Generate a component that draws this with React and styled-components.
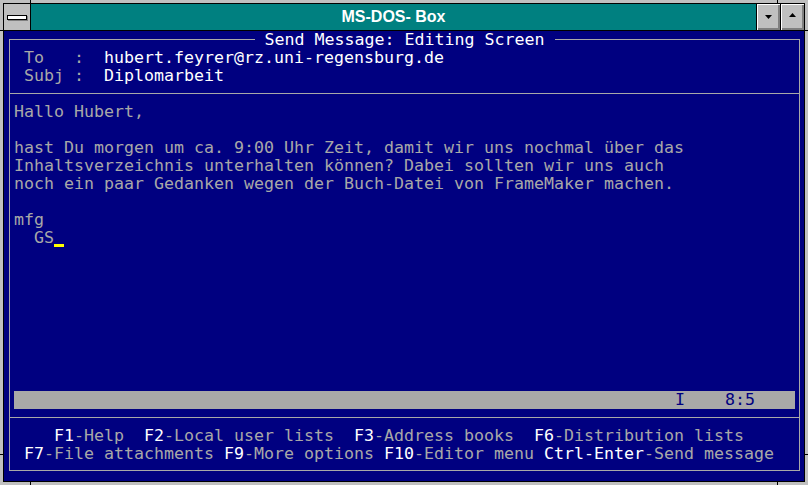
import React from 'react';
import styled, { createGlobalStyle } from 'styled-components';

const GlobalStyle = createGlobalStyle`
html, body {
  margin:0;
  padding:0;
  background:#c0c0c0;
}
body {
  width:808px;
  height:485px;
  overflow:hidden;
}
`;

const Window = styled.div`
position:relative;
width:808px;
height:485px;
box-sizing:border-box;
padding:3px;
background:#c0c0c0;
&::after {
  content:'';
  position:absolute;
  inset:0;
  pointer-events:none;
  background:
    linear-gradient(#000,#000) 30px 0 / 1px 3px no-repeat,
    linear-gradient(#000,#000) 777px 0 / 1px 3px no-repeat,
    linear-gradient(#000,#000) 30px 482px / 1px 3px no-repeat,
    linear-gradient(#000,#000) 777px 482px / 1px 3px no-repeat,
    linear-gradient(#000,#000) 0 30px / 3px 1px no-repeat,
    linear-gradient(#000,#000) 0 454px / 3px 1px no-repeat,
    linear-gradient(#000,#000) 805px 30px / 3px 1px no-repeat,
    linear-gradient(#000,#000) 805px 454px / 3px 1px no-repeat;
}
`;
const Inner = styled.div`
border:1px solid #000;
display:flex;
flex-direction:column;
`;
const TitleBar = styled.div`
display:flex;
height:26px;
background:#008080;
border-bottom:1px solid #000;
`;
const SysMenu = styled.div`
width:26px;
background:#c0c0c0;
border-right:1px solid #000;
display:flex;
align-items:center;
justify-content:center;
`;
const SysBar = styled.span`
display:block;
width:18px;
height:3px;
margin-top:1px;
background:#fff;
border:1px solid #000;
box-shadow:1px 1px 0 #808080;
`;
const Caption = styled.div`
flex:1;
text-align:center;
line-height:26px;
color:#fff;
font-family:"Liberation Sans", Arial, sans-serif;
font-weight:bold;
font-size:16px;
`;
const SizeButton = styled.div`
width:24px;
border-left:1px solid #000;
background:#c0c0c0;
box-shadow:inset 1px 1px 0 #fff, inset -1px -1px 0 #808080, inset -2px -2px 0 #808080;
display:flex;
justify-content:center;
padding-top:${p => p.$top}px;
box-sizing:border-box;
svg { display:block; }
`;

// 80x25 text screen, 10x18 cells
const Screen = styled.div`
height:450px;
box-sizing:border-box;
background:#000080;
padding:8px 4px 10px 5px;
display:flex;
font-family:"DejaVu Sans Mono", "Liberation Mono", monospace;
font-size:16.61px;
`;
const Panel = styled.div`
flex:1;
border:1px solid #a8a8a8;
padding-bottom:7px;
display:flex;
flex-direction:column;
`;
const TitleRow = styled.div`
height:18px;
margin-top:-9px;
display:flex;
justify-content:center;
`;
const TitleText = styled.span`
padding:0 10px;
background:#000080;
color:#fff;
line-height:18px;
white-space:pre;
`;
const Line = styled.div`
height:18px;
line-height:18px;
padding-left:4px;
white-space:pre;
color:#a8a8a8;
`;
const Hi = styled.span`
color:#fff;
`;
const Divider = styled.div`
margin:8px 0 9px;
border-top:1px solid #a8a8a8;
`;
const Body = styled.div`
flex:1;
`;
const Cursor = styled.span`
display:inline-block;
width:10px;
height:18px;
vertical-align:top;
box-shadow:inset 0 -3px 0 #ffff00;
`;
const StatusBar = styled.div`
height:18px;
line-height:18px;
margin:0 4px;
padding-right:40px;
background:#a8a8a8;
color:#000080;
display:flex;
justify-content:flex-end;
white-space:pre;
`;

const Arrow = ({ up }) => (
  <svg width="7" height="4" viewBox="0 0 7 4">
    <polygon points={up ? '3.5,0 7,4 0,4' : '0,0 7,0 3.5,4'} fill="#000" />
  </svg>
);

const keys1 = [['F1', 'Help'], ['F2', 'Local user lists'], ['F3', 'Address books'], ['F6', 'Distribution lists']];
const keys2 = [['F7', 'File attachments'], ['F9', 'More options'], ['F10', 'Editor menu'], ['Ctrl-Enter', 'Send message']];

const KeyLine = ({ lead, sep, items }) => (
  <Line>
    {lead}
    {items.map(([k, label], i) => (
      <React.Fragment key={k}>
        {i > 0 && sep}
        <Hi>{k}</Hi>-{label}
      </React.Fragment>
    ))}
  </Line>
);

const body = [
  'Hallo Hubert,',
  '',
  'hast Du morgen um ca. 9:00 Uhr Zeit, damit wir uns nochmal über das',
  'Inhaltsverzeichnis unterhalten können? Dabei sollten wir uns auch',
  'noch ein paar Gedanken wegen der Buch-Datei von FrameMaker machen.',
  '',
  'mfg'
];

export default function App() {
  return (
    <Window>
      <GlobalStyle />
      <Inner>
        <TitleBar>
          <SysMenu><SysBar /></SysMenu>
          <Caption>MS-DOS- Box</Caption>
          <SizeButton $top={11}><Arrow /></SizeButton>
          <SizeButton $top={9}><Arrow up /></SizeButton>
        </TitleBar>
        <Screen>
          <Panel>
            <TitleRow><TitleText>Send Message: Editing Screen</TitleText></TitleRow>
            <Line>{' To   :  '}<Hi>hubert.feyrer@rz.uni-regensburg.de</Hi></Line>
            <Line>{' Subj :  '}<Hi>Diplomarbeit</Hi></Line>
            <Divider />
            <Body>
              {body.map((t, i) => <Line key={i}>{t}</Line>)}
              <Line>{'  GS'}<Cursor /></Line>
            </Body>
            <StatusBar>{'I    8:5'}</StatusBar>
            <Divider />
            <KeyLine lead="    " sep="  " items={keys1} />
            <KeyLine lead=" " sep=" " items={keys2} />
          </Panel>
        </Screen>
      </Inner>
    </Window>
  );
}
